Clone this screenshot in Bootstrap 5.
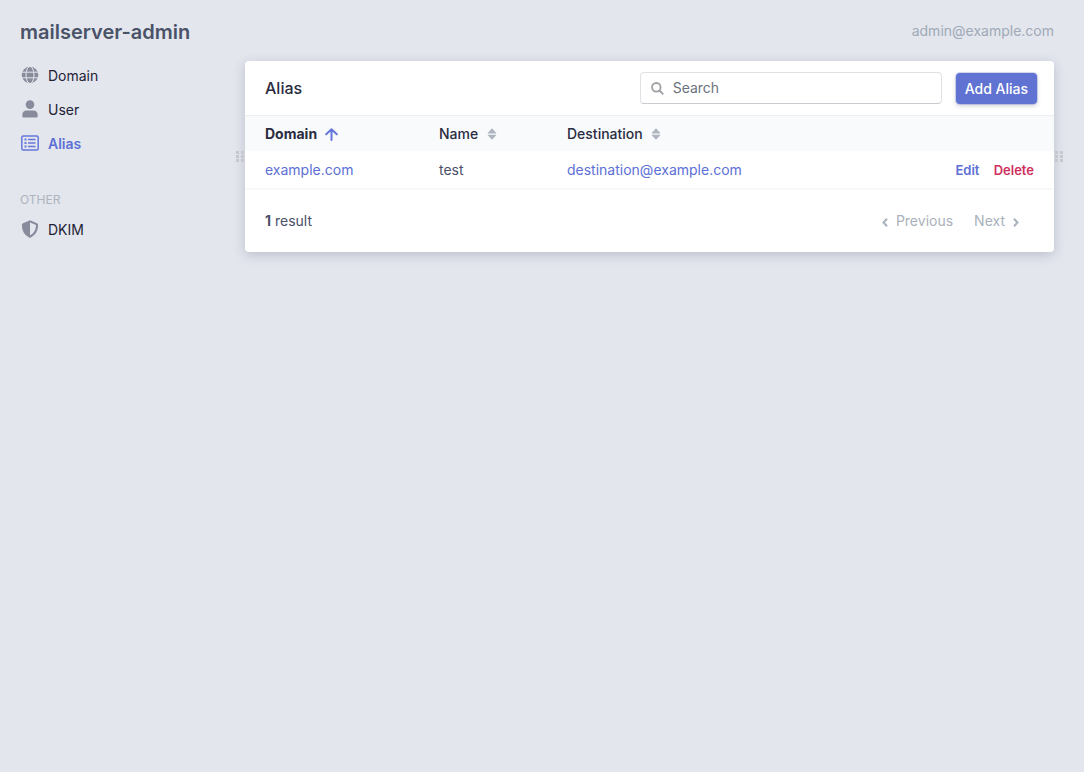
<!DOCTYPE html>
<html lang="en">
<head>
<meta charset="utf-8">
<meta name="viewport" content="width=device-width, initial-scale=1">
<title>Alias - mailserver-admin</title>
<link href="https://cdn.jsdelivr.net/npm/bootstrap@5.3.0/dist/css/bootstrap.min.css" rel="stylesheet">
<style>
body { background: #e3e6ed; color: #2a2b40; font: 14px/20px Inter, sans-serif; min-height: 100vh; }
a { color: #5c70d6; text-decoration: none; }
.sidebar { width: 245px; padding: 20px 20px 0; }
.brand { color: #4a5268; font-size: 20px; line-height: 24px; font-weight: 600; }
.side-menu { padding-top: 15px; }
.side-menu .nav-link { color: #1f2236; padding: 7px 0; gap: 8px; }
.side-menu .nav-link.active { color: #5c70d6; font-weight: 600; }
.side-menu svg { width: 20px; height: 18px; color: #888b9b; margin-bottom: 2px; }
.side-menu .active svg { color: #6678da; }
.menu-heading { color: #adb4be; font-size: 12px; line-height: 16px; padding: 31px 0 5px; }
.main-area { padding: 21px 30px 20px 0; }
.account { color: #a0a9b8; }
.panel { background: #fff; border-radius: 4px; margin-top: 20px; box-shadow: 0 3px 12px rgba(50, 60, 90, .22); }
.panel-top { padding: 11px 17px 11px 20px; gap: 14px; }
.panel-top h1 { font-size: 16px; line-height: 24px; font-weight: 500; }
.search-box { width: 302px; }
.search-box svg { left: 11px; top: 10px; color: #a0a0a4; }
.search-box .form-control { font-size: 14px; line-height: 20px; padding: 4px 10px 6px 32px; border-color: #dfe1e4 #dfe1e4 #c7cacf; border-radius: 4px; height: 32px; }
.search-box .form-control::placeholder { color: #6c737d; opacity: 1; }
.btn-add { background: #6072d2; border: 0; color: #fff; font-size: 14px; line-height: 20px; font-weight: 500; padding: 6px 9px 5px; border-radius: 4px; box-shadow: 0 0 0 1px rgba(96, 114, 210, .25), 0 2px 4px rgba(60, 66, 87, .25); }
.btn-add:hover { background: #4d60c4; color: #fff; }
.alias-table { color: #4a5068; }
.alias-table th, .alias-table td { padding: 9px 0 7px 20px; border: 0; }
.alias-table th { background: #f8fafc; box-shadow: inset 0 1px #eceef2; font-weight: 500; line-height: 20px; }
.alias-table th a { color: #2a2b40; }
.alias-table th svg { margin: 0 0 2px 5px; }
.alias-table td { padding: 9px 0 8px 20px; border-bottom: 2px solid #f8f9fb; }
.alias-table .sorted a { font-weight: 700; }
.alias-table .row-actions { font-size: 13px; font-weight: 600; padding-right: 20px; }
.col-domain { width: 174px; }
.col-name { width: 128px; }
.delete-link { color: #cf3060; margin-left: 11px; }
.grip { width: 8px; height: 11px; top: 90px; color: #c6c8cd; }
.grip-start { left: -9px; }
.grip-end { right: -9px; }
.panel-foot { color: #4a5068; padding: 21px 35px 21px 20px; }
.pager { gap: 21px; }
.pager a { color: #a9b1bb; }
</style>
<script defer src="https://cdn.jsdelivr.net/npm/bootstrap@5.3.0/dist/js/bootstrap.bundle.min.js"></script>
</head>
<body class="d-flex">
<aside class="sidebar flex-shrink-0">
  <a class="brand d-block" href="#">mailserver-admin</a>
  <nav class="side-menu nav flex-column">
    <a class="nav-link d-flex align-items-center" href="#">
      <svg viewBox="0 0 20 18" aria-hidden="true"><g fill="currentColor"><circle cx="10" cy="9" r="8.3"/></g><g fill="none" stroke="#e3e6ed" stroke-width="1"><ellipse cx="10" cy="9" rx="4" ry="8.5"/><path d="M1 6.2h18M1 11.8h18"/></g></svg>
      <span>Domain</span></a>
    <a class="nav-link d-flex align-items-center" href="#">
      <svg viewBox="0 0 20 18" fill="currentColor" aria-hidden="true"><circle cx="10" cy="4.6" r="4.3"/><path d="M6.500 10.500h7c2.500 0 4.200 1.800 4.200 4.200v1.200c0 1-.7 1.700-1.700 1.700H4c-1 0-1.700-.7-1.700-1.700v-1.200c0-2.400 1.700-4.200 4.200-4.200z"/></svg>
      <span>User</span></a>
    <a class="nav-link active d-flex align-items-center" aria-current="page" href="#">
      <svg viewBox="0 0 20 18" fill="none" stroke="currentColor" aria-hidden="true"><rect x="1.800" y="2" width="16.400" height="14" rx="1.500" stroke-width="1.500"/><path d="M8 5.500h7.500M8 9h7.500M8 12.500h7.500" stroke-width="1.300"/><path d="M4.500 5.500h2M4.500 9h2M4.500 12.500h2" stroke-width="1.800"/></svg>
      <span>Alias</span></a>
    <div class="menu-heading">OTHER</div>
    <a class="nav-link d-flex align-items-center" href="#">
      <svg viewBox="0 0 20 18" aria-hidden="true"><path fill="currentColor" fill-rule="evenodd" d="M10 .3l7 2.900c.7.300 1.100.9 1.100 1.600 0 6-2.500 10.200-7.200 12.600-.6.300-1.200.3-1.800 0C4.400 15 1.900 10.800 1.900 4.800c0-.7.400-1.300 1.100-1.600zM10 2.600v12.900c3.800-2 5.900-5.300 6-10.400z"/></svg>
      <span>DKIM</span></a>
  </nav>
</aside>
<main class="main-area flex-grow-1">
  <div class="account text-end">admin@example.com</div>
  <section class="panel position-relative">
    <header class="panel-top d-flex align-items-center">
      <h1 class="mb-0 me-auto">Alias</h1>
      <form class="search-box position-relative" role="search">
        <svg class="position-absolute" width="13" height="13" viewBox="0 0 13 13" fill="none" stroke="currentColor" stroke-width="1.800" aria-hidden="true"><circle cx="5.300" cy="5.300" r="4.300"/><path d="M8.500 8.500l3.800 3.800"/></svg>
        <input class="form-control" type="search" placeholder="Search" aria-label="Search">
      </form>
      <button class="btn btn-add" type="button">Add Alias</button>
    </header>
    <table class="alias-table w-100">
      <thead><tr>
        <th class="col-domain sorted" scope="col" aria-sort="ascending"><a href="#">Domain <svg width="13" height="13" viewBox="0 0 13 13" fill="none" stroke="#6678da" stroke-width="2" stroke-linecap="round" stroke-linejoin="round" aria-hidden="true"><path d="M6.500 12V1.200M1.200 6.300l5.300-5.100 5.300 5.100"/></svg></a></th>
        <th class="col-name" scope="col"><a href="#">Name <svg width="10" height="12" viewBox="0 0 10 12" fill="#adb5bf" aria-hidden="true"><path d="M5 .3L9.300 5Q9.300 5.500 8.500 5.500H1.500Q.7 5.500 .7 5zM5 11.700L9.300 7.300Q9.300 6.800 8.500 6.800H1.500Q.7 6.800 .7 7.300z"/></svg></a></th>
        <th scope="col"><a href="#">Destination <svg width="10" height="12" viewBox="0 0 10 12" fill="#adb5bf" aria-hidden="true"><path d="M5 .3L9.300 5Q9.300 5.500 8.500 5.500H1.500Q.7 5.500 .7 5zM5 11.700L9.300 7.300Q9.300 6.800 8.500 6.800H1.500Q.7 6.800 .7 7.300z"/></svg></a></th>
        <th scope="col" aria-label="Actions"></th>
      </tr></thead>
      <tbody><tr>
        <td><a href="#">example.com</a></td>
        <td>test</td>
        <td><a href="#">destination@example.com</a></td>
        <td class="row-actions text-end"><a href="#">Edit</a> <a class="delete-link" href="#">Delete</a></td>
      </tr></tbody>
    </table>
    <svg class="grip grip-start position-absolute" viewBox="0 0 8 11" fill="currentColor" aria-hidden="true"><path d="M0 0h3v3H0zM5 0h3v3H5zM0 4h3v3H0zM5 4h3v3H5zM0 8h3v3H0zM5 8h3v3H5z"/></svg>
    <svg class="grip grip-end position-absolute" viewBox="0 0 8 11" fill="currentColor" aria-hidden="true"><path d="M0 0h3v3H0zM5 0h3v3H5zM0 4h3v3H0zM5 4h3v3H5zM0 8h3v3H0zM5 8h3v3H5z"/></svg>
    <footer class="panel-foot d-flex justify-content-between">
      <div><strong>1</strong> result</div>
      <nav class="pager d-flex" aria-label="Pages">
        <a href="#"><svg class="me-2" width="6" height="9" viewBox="0 0 6 9" fill="none" stroke="currentColor" stroke-width="2" aria-hidden="true"><path d="M5 .8L1.500 4.500 5 8.200"/></svg>Previous</a>
        <a href="#">Next<svg class="ms-2" width="6" height="9" viewBox="0 0 6 9" fill="none" stroke="currentColor" stroke-width="2" aria-hidden="true"><path d="M1 .8l3.500 3.700L1 8.200"/></svg></a>
      </nav>
    </footer>
  </section>
</main>
</body>
</html>
